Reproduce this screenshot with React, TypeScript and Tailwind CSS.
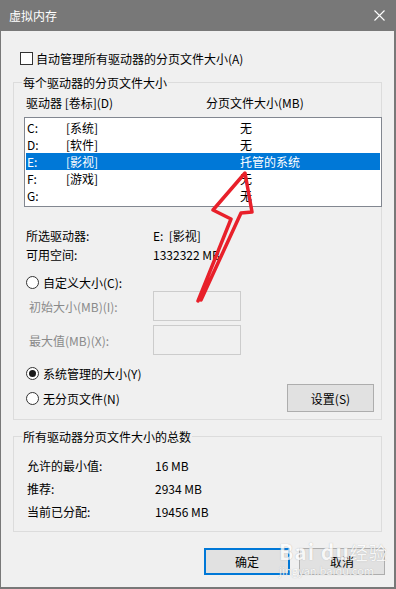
import React from "react";

const font = { fontFamily: '"Noto Sans CJK SC", "Noto Sans", sans-serif' };

const drives = [
  { letter: "C:", label: "[系统]", size: "无" },
  { letter: "D:", label: "[软件]", size: "无" },
  { letter: "E:", label: "[影视]", size: "托管的系统", selected: true },
  { letter: "F:", label: "[游戏]", size: "无" },
  { letter: "G:", label: "", size: "无" },
];

function Radio({ checked }: { checked?: boolean }) {
  return (
    <span className="w-[13px] h-[13px] rounded-full border border-[#333333] bg-white flex items-center justify-center shrink-0">
      {checked && <span className="w-[7px] h-[7px] rounded-full bg-[#1a1a1a]" />}
    </span>
  );
}

function GroupBox({
  title,
  className,
  children,
}: {
  title: string;
  className: string;
  children: React.ReactNode;
}) {
  return (
    <div className={`relative border border-[#dcdcdc] w-[369px] ${className}`}>
      <span className="absolute left-[8px] -top-[9px] px-[1px] bg-[#f0f0f0] leading-[17px]">
        {title}
      </span>
      {children}
    </div>
  );
}

export default function App() {
  return (
    <div
      className="relative w-[396px] h-[589px] flex flex-col bg-[#f0f0f0] text-[12px] text-black overflow-hidden"
      style={font}
    >
      {/* Title bar */}
      <div className="h-[31px] shrink-0 bg-[#787878] flex items-center justify-between pl-[9px] pr-[11px]">
        <span className="text-white leading-[17px]">虚拟内存</span>
        <svg width="11" height="11" viewBox="0 0 11 11">
          <path d="M0.5 0.5L10.5 10.5M10.5 0.5L0.5 10.5" stroke="#ffffff" strokeWidth="1.1" />
        </svg>
      </div>

      {/* Body */}
      <div className="flex-1 flex flex-col border-l border-r-2 border-b-2 border-[#787878] pl-[12px] pr-[9px] pt-[21px]">
        <label className="flex items-center h-[13px] ml-[7px] gap-[3px]">
          <span className="w-[13px] h-[13px] border border-[#333333] bg-white shrink-0" />
          <span className="leading-[17px]">自动管理所有驱动器的分页文件大小(A)</span>
        </label>

        <GroupBox title="每个驱动器的分页文件大小" className="mt-[17px] pl-[10px] pt-[11px] pb-[7px]">
          <div className="flex h-[17px] items-center leading-[17px] pl-[2px]">
            <span className="w-[180px]">驱动器 [卷标](D)</span>
            <span>分页文件大小(MB)</span>
          </div>

          <div className="mt-[6px] w-[358px] border border-[#828790] bg-white pt-[1px] pb-[2px] px-[1px]">
            {drives.map((d) => (
              <div
                key={d.letter}
                className={`flex h-[17px] items-center leading-[17px] pl-[1px] ${
                  d.selected ? "bg-[#0078d7] text-white" : ""
                }`}
              >
                <span className="w-[39px]">{d.letter}</span>
                <span className="w-[174px]">{d.label}</span>
                <span>{d.size}</span>
              </div>
            ))}
          </div>

          <div className="mt-[19px] pl-[2px]">
            <div className="flex h-[19px] items-center leading-[17px]">
              <span className="w-[127px]">所选驱动器:</span>
              <span>E:&nbsp;&nbsp;[影视]</span>
            </div>
            <div className="flex h-[19px] items-center leading-[17px]">
              <span className="w-[127px]">可用空间:</span>
              <span>1332322 MB</span>
            </div>
          </div>

          <div className="mt-[10px] flex h-[17px] items-center gap-[4px] pl-[2px] leading-[17px]">
            <Radio />
            <span>自定义大小(C):</span>
          </div>

          <div className="flex h-[30px] items-center pl-[5px] text-[#8a8a8a]">
            <span className="w-[124px] leading-[17px]">初始大小(MB)(I):</span>
            <span className="w-[88px] h-[30px] border border-[#cccccc] bg-[#f0f0f0]" />
          </div>
          <div className="mt-[4px] flex h-[30px] items-center pl-[5px] text-[#8a8a8a]">
            <span className="w-[124px] leading-[17px]">最大值(MB)(X):</span>
            <span className="w-[88px] h-[30px] border border-[#cccccc] bg-[#f0f0f0]" />
          </div>

          <div className="mt-[10px] flex h-[17px] items-center gap-[4px] pl-[2px] leading-[17px]">
            <Radio checked />
            <span>系统管理的大小(Y)</span>
          </div>

          <div className="mt-[2px] flex h-[28px] items-center pl-[2px] pr-[7px]">
            <div className="flex items-center gap-[4px] leading-[17px]">
              <Radio />
              <span>无分页文件(N)</span>
            </div>
            <button className="ml-auto w-[87px] h-[28px] border border-[#adadad] bg-[#e1e1e1] leading-[17px]">
              设置(S)
            </button>
          </div>
        </GroupBox>

        <GroupBox title="所有驱动器分页文件大小的总数" className="mt-[16px] pl-[13px] pt-[17px] pb-[8px]">
          {[
            ["允许的最小值:", "16 MB"],
            ["推荐:", "2934 MB"],
            ["当前已分配:", "19456 MB"],
          ].map(([k, v]) => (
            <div key={k} className="flex h-[23px] items-center leading-[17px]">
              <span className="w-[128px]">{k}</span>
              <span>{v}</span>
            </div>
          ))}
        </GroupBox>

        <div className="mt-[16px] flex justify-end gap-[9px]">
          <button className="w-[86px] h-[27px] border-2 border-[#0078d7] bg-[#e1e1e1] leading-[17px]">
            确定
          </button>
          <button className="w-[86px] h-[27px] border border-[#adadad] bg-[#e1e1e1] leading-[17px]">
            取消
          </button>
        </div>
      </div>

      {/* Watermark */}
      <div
        className="absolute left-[279px] top-[538px] pointer-events-none select-none text-white opacity-75 leading-[13px]"
        style={{ textShadow: "0 0 1px #9a9a9a" }}
      >
        <div className="font-bold text-[21px] leading-[26px] tracking-[1px]">
          Bai du<span className="font-normal text-[18px]">经验</span>
        </div>
        <div className="text-[11px] -mt-[1px]">jingyan.baidu.com</div>
      </div>

      {/* Red hand-drawn arrow */}
      <svg
        className="absolute left-0 top-0 pointer-events-none"
        width="396"
        height="589"
        viewBox="0 0 396 589"
      >
        <path
          d="M198 301 L231 219 L213 210 L245 173 L252 212 L241 213 L201 300"
          fill="none"
          stroke="#e8202a"
          strokeWidth="3.5"
          strokeLinejoin="round"
          strokeLinecap="round"
        />
      </svg>
    </div>
  );
}
